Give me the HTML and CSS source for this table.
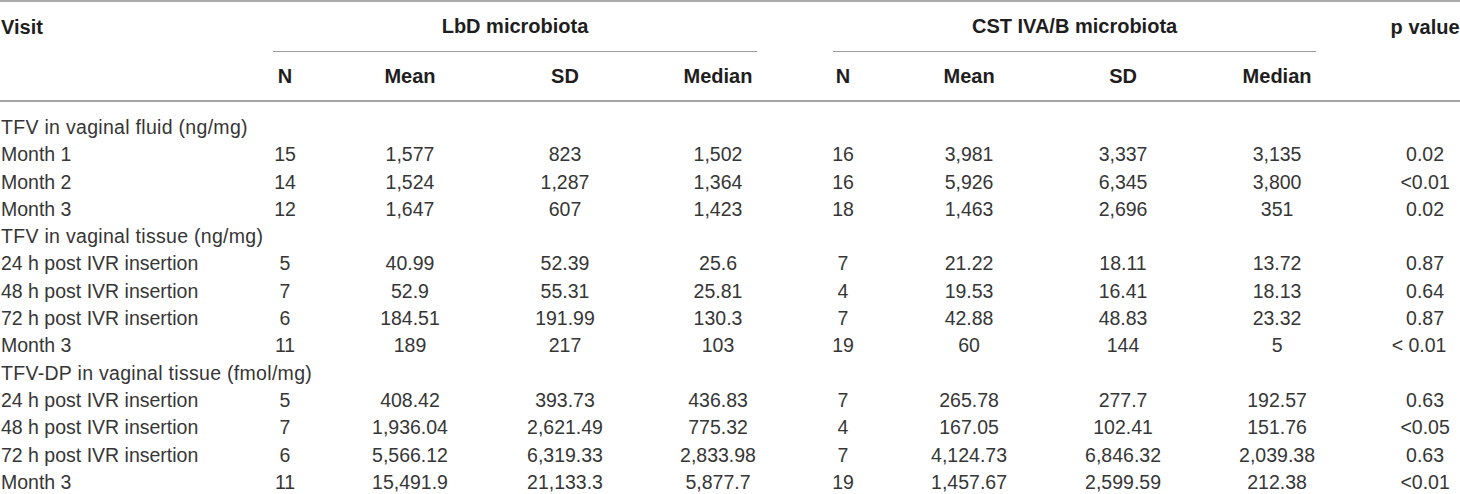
FILE: index.html
```html
<!DOCTYPE html>
<html lang="en">
<head>
	<meta charset="UTF-8">
	<title>TFV concentrations by microbiota</title>
	<link rel="stylesheet" href="styles.css">
</head>
<body>
	<table class="tbl">
		<colgroup>
			<col class="c-visit">
			<col class="c-n">
			<col class="c-wide">
			<col class="c-sd">
			<col class="c-med">
			<col class="c-n2">
			<col class="c-wide2">
			<col class="c-sd">
			<col class="c-wide2">
			<col class="c-p">
		</colgroup>
		<thead>
			<tr class="top">
				<th class="lbl">Visit</th>
				<th colspan="4" class="grp grp-a"><div>LbD microbiota</div></th>
				<th colspan="4" class="grp grp-b"><div>CST IVA/B microbiota</div></th>
				<th class="pv">p value</th>
			</tr>
			<tr class="sub">
				<th></th>
				<th>N</th>
				<th>Mean</th>
				<th>SD</th>
				<th>Median</th>
				<th>N</th>
				<th>Mean</th>
				<th>SD</th>
				<th>Median</th>
				<th></th>
			</tr>
		</thead>
		<tbody>
			<tr class="sec"><td colspan="10">TFV in vaginal fluid (ng/mg)</td></tr>
			<tr><td>Month 1</td><td>15</td><td>1,577</td><td>823</td><td>1,502</td><td>16</td><td>3,981</td><td>3,337</td><td>3,135</td><td class="pv">0.02</td></tr>
			<tr><td>Month 2</td><td>14</td><td>1,524</td><td>1,287</td><td>1,364</td><td>16</td><td>5,926</td><td>6,345</td><td>3,800</td><td class="pv">&lt;0.01</td></tr>
			<tr><td>Month 3</td><td>12</td><td>1,647</td><td>607</td><td>1,423</td><td>18</td><td>1,463</td><td>2,696</td><td>351</td><td class="pv">0.02</td></tr>
			<tr class="sec"><td colspan="10">TFV in vaginal tissue (ng/mg)</td></tr>
			<tr><td>24 h post IVR insertion</td><td>5</td><td>40.99</td><td>52.39</td><td>25.6</td><td>7</td><td>21.22</td><td>18.11</td><td>13.72</td><td class="pv">0.87</td></tr>
			<tr><td>48 h post IVR insertion</td><td>7</td><td>52.9</td><td>55.31</td><td>25.81</td><td>4</td><td>19.53</td><td>16.41</td><td>18.13</td><td class="pv">0.64</td></tr>
			<tr><td>72 h post IVR insertion</td><td>6</td><td>184.51</td><td>191.99</td><td>130.3</td><td>7</td><td>42.88</td><td>48.83</td><td>23.32</td><td class="pv">0.87</td></tr>
			<tr><td>Month 3</td><td>11</td><td>189</td><td>217</td><td>103</td><td>19</td><td>60</td><td>144</td><td>5</td><td class="pv pv-sp">&lt; 0.01</td></tr>
			<tr class="sec"><td colspan="10">TFV-DP in vaginal tissue (fmol/mg)</td></tr>
			<tr><td>24 h post IVR insertion</td><td>5</td><td>408.42</td><td>393.73</td><td>436.83</td><td>7</td><td>265.78</td><td>277.7</td><td>192.57</td><td class="pv">0.63</td></tr>
			<tr><td>48 h post IVR insertion</td><td>7</td><td>1,936.04</td><td>2,621.49</td><td>775.32</td><td>4</td><td>167.05</td><td>102.41</td><td>151.76</td><td class="pv">&lt;0.05</td></tr>
			<tr><td>72 h post IVR insertion</td><td>6</td><td>5,566.12</td><td>6,319.33</td><td>2,833.98</td><td>7</td><td>4,124.73</td><td>6,846.32</td><td>2,039.38</td><td class="pv">0.63</td></tr>
			<tr><td>Month 3</td><td>11</td><td>15,491.9</td><td>21,133.3</td><td>5,877.7</td><td>19</td><td>1,457.67</td><td>2,599.59</td><td>212.38</td><td class="pv">&lt;0.01</td></tr>
		</tbody>
	</table>
</body>
</html>
```

FILE: styles.css
```css
*{margin: 0;padding: 0;box-sizing: border-box;}
body{
	background: #fff;
	font-family: "Liberation Sans", Arial, sans-serif;
	font-size: 19.5px;
	color: #363636;
}
.tbl{
	width: 1460px;
	table-layout: fixed;
	border-collapse: separate;
	border-spacing: 0;
	border-top: 2px solid #aaa;
}
.c-visit{width: 262px;}
.c-n{width: 46px;}
.c-wide{width: 204px;}
.c-sd{width: 106px;}
.c-med{width: 200px;}
.c-n2{width: 50px;}
.c-wide2{width: 202px;}
.c-p{width: 82px;}
.tbl th{
	font-weight: bold;
	color: #1e1e1e;
	text-align: center;
	vertical-align: middle;
	font-size: 20px;
}
.tbl td{
	text-align: center;
	line-height: 27.3px;
	white-space: nowrap;
}
.tbl td:first-child,
.tbl th.lbl{
	text-align: left;
	padding-left: 1px;
}
.sec td{
	letter-spacing: 0.3px;
}
.top th{
	height: 50px;
	line-height: 49px;
}
.grp div{
	height: 50px;
	line-height: 49px;
	border-bottom: 1px solid #9c9c9c;
}
.grp-a{padding: 0 61px 0 11px;}
.grp-b{padding: 0 62px 0 15px;}
.sub th{
	height: 50px;
	line-height: 48px;
	border-bottom: 2px solid #a3a3a3;
}
.tbl .pv{
	padding-left: 12px;
}
.tbl .pv-sp{
	padding-left: 0;
}
tbody tr:first-child td{
	padding-top: 12px;
}
```
